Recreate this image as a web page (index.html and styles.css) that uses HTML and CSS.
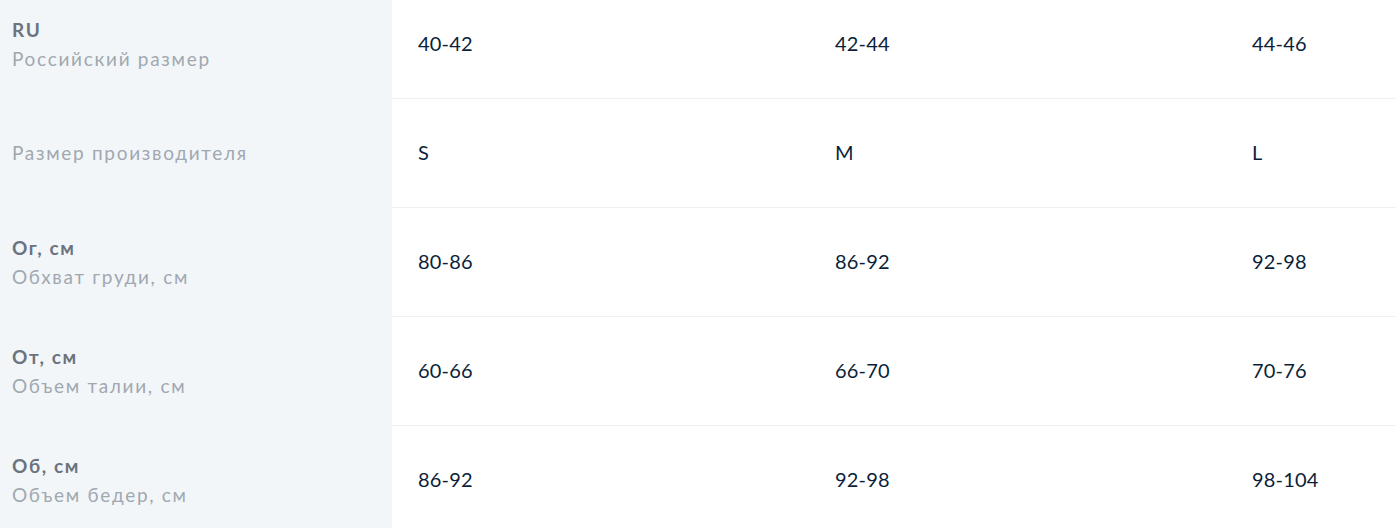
FILE: index.html
```html
<!DOCTYPE html>
<html lang="ru">
<head>
<meta charset="utf-8">
<title>Таблица размеров</title>
<link rel="stylesheet" href="styles.css">
</head>
<body>
<div class="table">
  <div class="row">
    <div class="head"><div class="code">RU</div><div class="name">Российский размер</div></div>
    <div class="cell">40-42</div><div class="cell">42-44</div><div class="cell">44-46</div>
  </div>
  <div class="row">
    <div class="head"><div class="name">Размер производителя</div></div>
    <div class="cell">S</div><div class="cell">M</div><div class="cell">L</div>
  </div>
  <div class="row">
    <div class="head"><div class="code">Ог, см</div><div class="name">Обхват груди, см</div></div>
    <div class="cell">80-86</div><div class="cell">86-92</div><div class="cell">92-98</div>
  </div>
  <div class="row">
    <div class="head"><div class="code">От, см</div><div class="name">Объем талии, см</div></div>
    <div class="cell">60-66</div><div class="cell">66-70</div><div class="cell">70-76</div>
  </div>
  <div class="row">
    <div class="head"><div class="code">Об, см</div><div class="name">Объем бедер, см</div></div>
    <div class="cell">86-92</div><div class="cell">92-98</div><div class="cell">98-104</div>
  </div>
</div>
</body>
</html>
```

FILE: styles.css
```css
html, body {
  margin: 0;
  padding: 0;
  background: #ffffff;
  overflow: hidden;
}
body {
  font-family: Lato, "Noto Sans", sans-serif;
}
.table {
  margin-top: -10px;
  width: 1643px;
}
.row {
  display: grid;
  grid-template-columns: 392px 417px 417px 417px;
  height: 109px;
}
.head {
  background: #f3f6f9;
  display: flex;
  flex-direction: column;
  justify-content: center;
  padding-left: 12px;
  padding-bottom: 2px;
}
.code {
  font-size: 19px;
  font-weight: 700;
  color: #6a737e;
  line-height: 29px;
  letter-spacing: 1.6px;
}
.name {
  font-size: 19px;
  color: #a0a8b0;
  line-height: 29px;
  letter-spacing: 1.7px;
}
.cell {
  display: flex;
  align-items: center;
  padding-left: 26px;
  padding-bottom: 2px;
  border-bottom: 1px solid #eef0f3;
  font-size: 20px;
  color: #0b1f3a;
  letter-spacing: 0.2px;
}
```
